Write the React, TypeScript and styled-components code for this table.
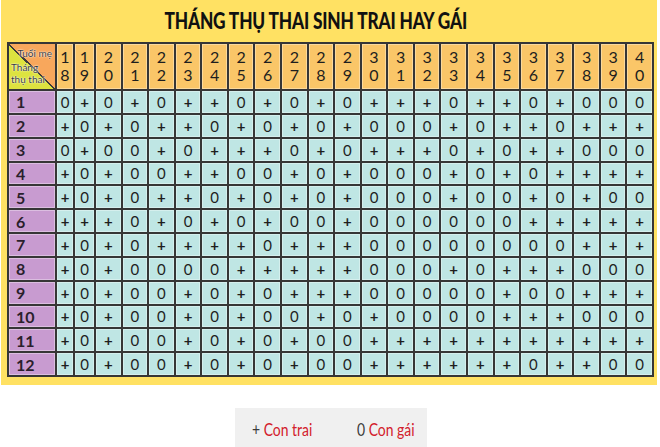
import React from "react";
import styled, { createGlobalStyle } from "styled-components";

const Global = createGlobalStyle`
  html, body { margin: 0; padding: 0; background: #ffffff; }
  body { font-family: Lato, "Open Sans", sans-serif; color: #222; }
`;

const Page = styled.div`
  width: 660px;
  display: flex;
  flex-direction: column;
  align-items: flex-start;
`;

const Poster = styled.div`
  width: 656px;
  margin-left: 1px;
  box-sizing: border-box;
  background: #ffe163;
  padding: 0 2px 8px 6px;
  display: flex;
  flex-direction: column;
`;

const TitleBar = styled.div`
  height: 42px;
  display: flex;
  align-items: center;
  justify-content: center;
  padding-right: 30px;
`;

const TitleText = styled.h1`
  margin: 0;
  font-family: Lato, sans-serif;
  font-weight: 900;
  font-size: 22px;
  line-height: 22px;
  color: #111;
  white-space: nowrap;
  transform: scaleX(0.785);
  letter-spacing: -0.2px;
`;

const Grid = styled.div`
  box-sizing: border-box;
  width: 647px;
  height: 335px;
  display: grid;
  grid-template-columns: 46px 16px 19px repeat(21, 1fr);
  grid-template-rows: 45px repeat(12, 1fr);
  gap: 2px;
  border: 2px solid #363636;
  background: #363636;
`;

const Cell = styled.div`
  display: flex;
  align-items: center;
  justify-content: center;
  box-shadow: inset 0 0 0 1px rgba(255, 255, 255, 0.35);
  font-family: Lato, sans-serif;
  color: #1e1e1e;
`;

const HeadCell = styled(Cell)`
  background: #fac668;
  flex-direction: column;
  gap: 1px;
  padding-bottom: 3px;
`;

const Digit = styled.span`
  display: block;
  font-size: 16px;
  line-height: 17px;
  height: 17px;
`;

const DataCell = styled(Cell)`
  background: #bfe6e4;
  font-size: 15px;
  font-weight: ${(p: { $plus: boolean }) => (p.$plus ? 700 : 400)};
`;

const RowLabel = styled(Cell)`
  background: #c89bd0;
  justify-content: flex-start;
  padding-left: 7px;
  font-size: 16px;
  font-weight: 700;
  color: #2a1f2c;
`;

const Corner = styled.div`
  display: flex;
  flex-direction: column;
  justify-content: space-between;
  padding: 3px 3px 4px 2px;
  background: linear-gradient(
    to top right,
    #dde33f calc(50% - 1px),
    #3a3a3a calc(50% - 1px),
    #3a3a3a calc(50% + 0.5px),
    #f8a75c calc(50% + 0.5px)
  );
  font-family: Lato, sans-serif;
  font-size: 10px;
  line-height: 12px;
  color: #3b3b3b;
  text-shadow: 0 0 2px #fff, 0 0 1px #fff;
`;

const CornerTop = styled.span`
  align-self: flex-end;
`;

const CornerBottom = styled.span`
  align-self: flex-start;
`;

const LegendBox = styled.div`
  margin: 23px 0 0 235px;
  width: 192px;
  height: 42px;
  box-sizing: border-box;
  background: #f0f0f0;
  display: flex;
  align-items: center;
  padding-left: 17px;
  gap: 31px;
  font-family: Lato, sans-serif;
  font-size: 17px;
`;

const LegendItem = styled.span`
  display: inline-block;
  color: #3a3a3a;
  white-space: nowrap;
  transform: scaleX(0.82);
  transform-origin: left center;
`;

const Red = styled.span`
  color: #d3202b;
`;

const ROWS = [
  "0+0+0++0+0+0+++0++0+000",
  "+0+0++0+0+0+000+0++0+++",
  "0+00+0+++0+0+++0+0++000",
  "+0+00++00+0+000+0+0++++",
  "+0+0++0+0+0+000+00+0+00",
  "+++0+0+0+00+000000+++++",
  "+0+0++++0+++00000000+++",
  "+0+0000+++++000+0+++000",
  "+0+00+0+0+++00000+00+++",
  "+0+00+0+00+0+0000+++000",
  "+0+00+0+0+00+++++++++++",
  "+0+00+0+0+00++++++0++00",
];

const AGES = Array.from({ length: 23 }, (_, i) => String(18 + i));

export default function App() {
  return (
    <>
      <Global />
      <Page>
        <Poster>
          <TitleBar>
            <TitleText>THÁNG THỤ THAI SINH TRAI HAY GÁI</TitleText>
          </TitleBar>
          <Grid>
            <Corner>
              <CornerTop>Tuổi mẹ</CornerTop>
              <CornerBottom>
                Tháng
                <br />
                thụ thai
              </CornerBottom>
            </Corner>
            {AGES.map((a) => (
              <HeadCell key={a}>
                <Digit>{a[0]}</Digit>
                <Digit>{a[1]}</Digit>
              </HeadCell>
            ))}
            {ROWS.map((row, r) => (
              <React.Fragment key={r}>
                <RowLabel>{r + 1}</RowLabel>
                {row.split("").map((v, c) => (
                  <DataCell key={c} $plus={v === "+"}>
                    {v}
                  </DataCell>
                ))}
              </React.Fragment>
            ))}
          </Grid>
        </Poster>
        <LegendBox>
          <LegendItem>
            + <Red>Con trai</Red>
          </LegendItem>
          <LegendItem>
            0 <Red>Con gái</Red>
          </LegendItem>
        </LegendBox>
      </Page>
    </>
  );
}
